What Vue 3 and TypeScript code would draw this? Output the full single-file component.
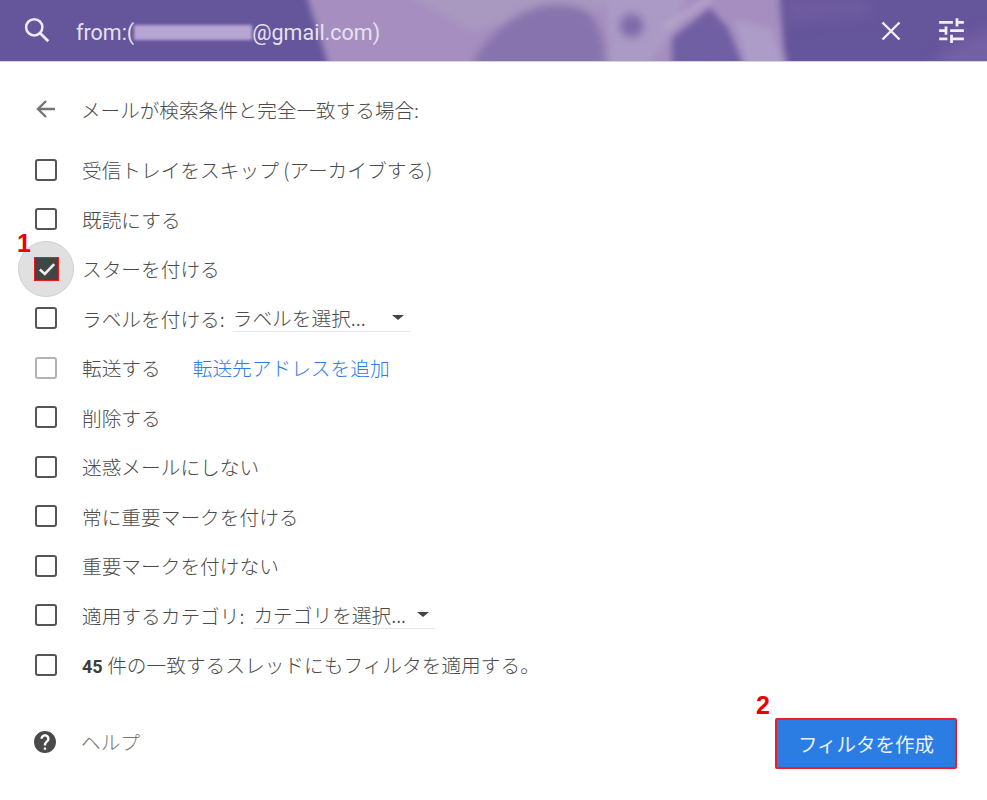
<script setup lang="ts">
interface Row {
  id: string
  label: string
  checked?: boolean
  disabled?: boolean
  select?: string
  selectClass?: string
  link?: string
  strong?: string
}
const rows: Row[] = [
  { id: 'skip', label: '受信トレイをスキップ (アーカイブする)' },
  { id: 'read', label: '既読にする' },
  { id: 'star', label: 'スターを付ける', checked: true },
  { id: 'label', label: 'ラベルを付ける:', select: 'ラベルを選択...', selectClass: 'sel-label' },
  { id: 'fwd', label: '転送する', disabled: true, link: '転送先アドレスを追加' },
  { id: 'del', label: '削除する' },
  { id: 'spam', label: '迷惑メールにしない' },
  { id: 'imp', label: '常に重要マークを付ける' },
  { id: 'noimp', label: '重要マークを付けない' },
  { id: 'cat', label: '適用するカテゴリ:', select: 'カテゴリを選択...', selectClass: 'sel-cat' },
  { id: 'also', label: '件の一致するスレッドにもフィルタを適用する。', strong: '45' },
]
</script>

<template>
  <div class="page">
    <header class="bar">
      <svg class="bg" viewBox="0 0 987 62" preserveAspectRatio="none" aria-hidden="true">
        <defs>
          <filter id="soft" x="-20%" y="-40%" width="140%" height="180%"><feGaussianBlur stdDeviation="3" /></filter>
          <filter id="softb" x="-20%" y="-40%" width="140%" height="180%"><feGaussianBlur stdDeviation="4" /></filter>
          <filter id="softer" x="-20%" y="-80%" width="140%" height="260%"><feGaussianBlur stdDeviation="7" /></filter>
        </defs>
        <rect width="987" height="62" fill="#65559b" />
        <g filter="url(#soft)">
          <path d="M305 -10 C312 15 322 40 330 72 L790 72 C778 40 786 15 778 -10 Z" fill="#a68fc0" />
          <path d="M400 -10 L620 -10 L600 10 L470 30 Z" fill="#a998bf" />
          <path d="M606 -10 L690 -10 L668 40 L640 72 L610 72 Z" fill="#ab9ac5" />
          <path d="M735 20 L772 30 L784 72 L750 72 Z" fill="#ad9cc8" />
        </g>
        <g filter="url(#softb)">
          <path d="M470 72 C478 45 498 28 520 14 C540 4 562 2 580 8 C598 16 606 38 605 72 Z" fill="#8773ad" />
          <path d="M620 26 C620 14 636 10 642 20 C646 30 640 38 630 37 C624 36 620 32 620 26 Z" fill="#7e6aa9" />
        </g>
        <g filter="url(#soft)">
          <path d="M672 38 L710 8 L728 28 L746 72 L672 72 Z" fill="#715fa3" />
          <path d="M664 28 L712 -3" stroke="#b9a9cd" stroke-width="5" fill="none" />
        </g>
        <g filter="url(#softer)">
          <path d="M930 72 C936 52 960 36 1000 28 L1000 72 Z" fill="#7260a3" />
          <path d="M785 0 L870 0 L870 14 L785 22 Z" fill="#6e5d9f" />
        </g>
      </svg>
      <svg class="ic-search" viewBox="0 0 24 24" width="30" height="30" aria-hidden="true">
        <circle cx="9.800" cy="9.800" r="6.500" fill="none" stroke="#eee9f4" stroke-width="2" />
        <path d="M14.600 14.600L21 21" stroke="#eee9f4" stroke-width="2.200" fill="none" />
      </svg>
      <div class="query">from:(<span class="redact"></span>@gmail.com)</div>
      <svg class="ic-close" viewBox="0 0 24 24" width="24" height="24" aria-hidden="true">
        <path d="M3.500 3.500L20.500 20.500M20.500 3.500L3.500 20.500" stroke="#f1eef6" stroke-width="2.400" fill="none" />
      </svg>
      <svg class="ic-tune" viewBox="0 0 24 24" width="33" height="33" aria-hidden="true">
        <path fill="#f1eef6" d="M3 17v2h6v-2H3zM3 5v2h10V5H3zm10 16v-2h8v-2h-8v-2h-2v6h2zM7 9v2H3v2h4v2h2V9H7zm14 4v-2H11v2h10zm-6-4h2V7h4V5h-4V3h-2v6z" />
      </svg>
    </header>

    <main class="content">
      <div class="heading">
        <svg class="ic-back" viewBox="0 0 24 24" width="24" height="24" aria-hidden="true">
          <path d="M21 12H4.500M12 4L4 12L12 20" stroke="#757575" stroke-width="2.400" fill="none" />
        </svg>
        <span>メールが検索条件と完全一致する場合:</span>
      </div>

      <ul class="rows">
        <li v-for="r in rows" :key="r.id" class="row">
          <span class="box-wrap" :class="{ halo: r.checked }">
            <span class="box" :class="{ on: r.checked, off: r.disabled }">
              <svg v-if="r.checked" viewBox="0 0 20 20" width="22" height="22" aria-hidden="true">
                <path d="M3.500 10.500L8 14.500L16.500 5.500" stroke="#ececec" stroke-width="2.400" fill="none" />
              </svg>
            </span>
            <b v-if="r.checked" class="mark mark-1">1</b>
          </span>
          <span class="text"><b v-if="r.strong" class="strong">{{ r.strong }}&nbsp;</b>{{ r.label }}</span>
          <span v-if="r.select" class="select" :class="r.selectClass">
            <span>{{ r.select }}</span><i class="caret"></i>
          </span>
          <a v-if="r.link" class="link">{{ r.link }}</a>
        </li>
      </ul>

      <footer class="foot">
        <svg class="ic-help" viewBox="0 0 24 24" width="24" height="24" aria-hidden="true">
          <path fill="#4a4a4a" fill-rule="evenodd" d="M12 1C5.900 1 1 5.900 1 12s4.900 11 11 11 11-4.900 11-11S18.100 1 12 1zm1.100 18.700h-2.300v-2.300h2.300v2.300zm2.400-8.300l-1 1.050c-.85.85-1.300 1.500-1.300 3.050h-2.400v-.6c0-1.200.5-2.300 1.300-3.100l1.400-1.450c.45-.4.7-1 .7-1.600 0-1.200-1-2.200-2.200-2.200s-2.200 1-2.200 2.200H7.400c0-2.500 2.100-4.600 4.600-4.600s4.600 2.100 4.600 4.600c0 1.100-.4 2-1.100 2.650z" />
        </svg>
        <span class="help">ヘルプ</span>
        <div class="create-wrap">
          <b class="mark mark-2">2</b>
          <button class="create" type="button">フィルタを作成</button>
        </div>
      </footer>
    </main>
  </div>
</template>

<style>
html, body { margin: 0; background: #fff; }
</style>

<style scoped>
.page {
  width: 987px;
  font-family: "Noto Sans CJK JP", "Noto Sans", sans-serif;
  font-size: 19.700px;
  font-weight: 300;
  color: #4a4a4a;
}
.bar {
  position: relative;
  height: 61px;
  border-bottom: 1px solid #d8d0e2;
  display: flex;
  align-items: center;
  overflow: hidden;
}
.bg { position: absolute; left: 0; top: 0; width: 100%; height: 62px; }
.ic-search, .query, .ic-close, .ic-tune { position: relative; }
.ic-search { margin-left: 22px; margin-top: -2px; }
.query {
  margin-left: 24px;
  margin-top: 3px;
  font-family: Roboto, "Liberation Sans", sans-serif;
  font-size: 21.500px;
  font-weight: 400;
  color: #e6e1ee;
  white-space: nowrap;
  display: flex;
  align-items: center;
}
.redact {
  display: inline-block;
  width: 118px;
  height: 15px;
  background: #b7a6d4;
  filter: blur(1.500px);
}
.ic-close { margin-left: auto; }
.ic-tune { margin-left: 32px; margin-right: 19px; }
.content { padding: 0 30px 0 0; }
.heading {
  height: 94px;
  display: flex;
  align-items: center;
  font-size: 19.600px;
}
.ic-back { margin-left: 34px; margin-right: 23px; }
.rows { list-style: none; margin: -11px 0 0; padding: 0; }
.row {
  height: 49.500px;
  display: flex;
  align-items: center;
}
.box-wrap {
  position: relative;
  width: 82px;
  height: 100%;
  flex: none;
  display: flex;
  align-items: center;
  padding-left: 35px;
  box-sizing: border-box;
}
.halo::before {
  content: "";
  position: absolute;
  left: 18px;
  top: -3px;
  width: 56px;
  height: 56px;
  border-radius: 50%;
  background: #e0e0e0;
  border: 1px solid #cfcfcf;
  box-sizing: border-box;
}
.box {
  position: relative;
  width: 22px;
  height: 22px;
  border: 2px solid #555;
  border-radius: 3px;
  box-sizing: border-box;
  display: flex;
  align-items: center;
  justify-content: center;
}
.box.off { border-color: #b3b3b3; }
.box.on {
  width: 25px;
  height: 24px;
  left: -1px;
  background: #444;
  border: 1.500px solid #f01818;
  border-radius: 0;
}
.mark {
  font-family: "Liberation Sans", sans-serif;
  font-weight: 700;
  color: #f00000;
  font-size: 25px;
  line-height: 1;
  position: absolute;
}
.mark-1 { left: 17px; top: -13px; }
.text { white-space: pre; }
.strong { font-family: Roboto, "Liberation Sans", sans-serif; font-weight: 700; font-size: 18px; color: #3c3c3c; }
.select {
  display: flex;
  align-items: center;
  margin-left: 8px;
  height: 28px;
  border-bottom: 1px solid #e6e6ee;
  box-sizing: border-box;
  white-space: nowrap;
}
.select span { line-height: 28px; }
.sel-label { width: 177px; }
.sel-cat { width: 182px; margin-left: 9px; }
.caret {
  width: 0;
  height: 0;
  margin-left: auto;
  border-left: 6px solid transparent;
  border-right: 6px solid transparent;
  border-top: 5px solid #444;
}
.sel-label .caret { margin-right: 6px; }
.sel-cat .caret { margin-right: 6px; }
.link { color: #2f7be6; margin-left: 32px; }
.foot {
  display: flex;
  align-items: center;
  height: 51px;
  margin-top: 28px;
}
.ic-help { margin-left: 33px; margin-right: 24px; margin-bottom: 3px; }
.help { color: #757575; margin-bottom: 3px; }
.create-wrap { position: relative; margin-left: auto; }
.create {
  display: block;
  width: 182px;
  height: 51px;
  background: #2b7de3;
  border: 2px solid #ee1c25;
  border-radius: 2px;
  color: #eaf1fb;
  font: inherit;
  font-weight: 400;
  font-size: 19.500px;
  padding: 0;
  box-sizing: border-box;
}
.mark-2 { left: -19px; top: -25px; }
</style>
